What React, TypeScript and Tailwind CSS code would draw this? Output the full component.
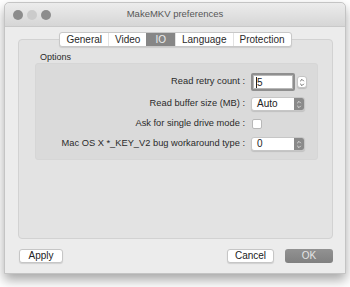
import React from "react";

const tabs = ["General", "Video", "IO", "Language", "Protection"];

const Stepper = () => (
  <div className="flex h-[12px] w-[10px] flex-col items-center justify-center rounded-[3px] border border-[#c4c4c4] bg-white shadow-[0_1px_1px_rgba(0,0,0,0.15)]">
    <svg width="6" height="9" viewBox="0 0 6 9" fill="none" stroke="#555" strokeWidth="0.9">
      <path d="M1.2 3.2 L3 1.4 L4.8 3.2" />
      <path d="M1.2 5.8 L3 7.6 L4.8 5.8" />
    </svg>
  </div>
);

const Popup = ({ value }: { value: string }) => (
  <div className="flex h-[14px] w-[54px] items-stretch overflow-hidden rounded-[3px] border border-[#c6c6c6] bg-white shadow-[0_1px_1px_rgba(0,0,0,0.12)]">
    <span className="flex-1 pl-[5px] text-[10px] leading-[12px] text-[#222]">{value}</span>
    <span className="flex w-[10px] items-center justify-center bg-[#8a8a8a]">
      <svg width="6" height="9" viewBox="0 0 6 9" fill="none" stroke="#e6e6e6" strokeWidth="0.9">
        <path d="M1.2 3.2 L3 1.4 L4.8 3.2" />
        <path d="M1.2 5.8 L3 7.6 L4.8 5.8" />
      </svg>
    </span>
  </div>
);

const Row = ({ label, children }: { label: string; children: React.ReactNode }) => (
  <div className="flex h-[20px] items-center">
    <span className="w-[209px] text-right text-[9.3px] text-[#2a2a2a]">{label}</span>
    <div className="ml-[6px] flex items-center">{children}</div>
  </div>
);

const App = () => {
  return (
    <div
      className="h-[287px] w-[350px] overflow-hidden bg-white pl-[4px] pt-[2px]"
      style={{ fontFamily: '"Liberation Sans", Arial, sans-serif' }}
    >
      <div className="flex h-[272px] w-[342px] flex-col rounded-t-[5px] border border-[#c4c4c4] bg-[#ececec] shadow-[0_6px_12px_rgba(0,0,0,0.35)]">
        <div className="relative flex h-[24px] items-center rounded-t-[5px] border-b border-[#c9c9c9] bg-gradient-to-b from-[#ececec] to-[#d6d6d6] pl-[8px]">
          <div className="flex gap-[4px]">
            <span className="h-[10px] w-[10px] rounded-full bg-[#8c8c8c]" />
            <span className="h-[10px] w-[10px] rounded-full bg-[#cbcbcb]" />
            <span className="h-[10px] w-[10px] rounded-full bg-[#8c8c8c]" />
          </div>
          <span className="absolute left-0 right-0 text-center text-[9.5px] text-[#575757]">
            MakeMKV preferences
          </span>
        </div>

        <div className="flex flex-1 flex-col pl-[13px] pt-[5px]">
          <div className="relative z-10 flex w-[315px] justify-center">
            <div className="flex h-[15px] overflow-hidden rounded-[3px] border border-[#c8c8c8] bg-white shadow-[0_1px_1px_rgba(0,0,0,0.1)]">
              {tabs.map((t, i) => (
                <span
                  key={t}
                  className={
                    t === "IO"
                      ? "flex items-center bg-[#868686] px-[9px] text-[10px] text-[#ededed]"
                      : i === 0
                        ? "flex items-center px-[6px] text-[10px] text-[#2a2a2a]"
                        : "flex items-center border-l border-[#e2e2e2] px-[6px] text-[10px] text-[#2a2a2a]"
                  }
                >
                  {t}
                </span>
              ))}
            </div>
          </div>

          <div className="-mt-[8px] h-[200px] w-[315px] rounded-[4px] border border-[#d2d2d2] bg-[#e3e3e3] pl-[16px] pt-[11px]">
            <div className="pl-[5px] text-[9px] leading-[12px] text-[#2a2a2a]">Options</div>
            <div className="h-[97px] w-[283px] rounded-[3px] border border-[#d6d6d6] bg-[#dadada] pt-[8px]">
              <div className="mb-[2px]">
                <Row label="Read retry count :">
                  <div className="rounded-[2px] border-2 border-[#8f8f8f] p-0">
                    <div className="flex h-[14px] w-[40px] items-center border border-[#b8b8b8] bg-white pl-[2px] text-[10px] text-[#222]">
                      <span className="border-l border-[#222] leading-[11px]">5</span>
                    </div>
                  </div>
                  <div className="ml-[2px]">
                    <Stepper />
                  </div>
                </Row>
              </div>
              <Row label="Read buffer size (MB) :">
                <Popup value="Auto" />
              </Row>
              <Row label="Ask for single drive mode :">
                <span className="ml-[1px] h-[10px] w-[10px] rounded-[2px] border border-[#b8b8b8] bg-white" />
              </Row>
              <Row label="Mac OS X *_KEY_V2 bug workaround type :">
                <Popup value="0" />
              </Row>
            </div>
          </div>

          <div className="mt-[10px] flex w-[315px] items-center">
            <button className="ml-[1px] h-[14px] w-[44px] rounded-[3px] border border-[#c6c6c6] bg-white text-[10px] leading-[12px] text-[#222] shadow-[0_1px_1px_rgba(0,0,0,0.12)]">
              Apply
            </button>
            <button className="ml-auto h-[14px] w-[47px] rounded-[3px] border border-[#c6c6c6] bg-white text-[10px] leading-[12px] text-[#222] shadow-[0_1px_1px_rgba(0,0,0,0.12)]">
              Cancel
            </button>
            <button className="ml-[11px] h-[14px] w-[48px] rounded-[3px] bg-gradient-to-b from-[#929292] to-[#808080] text-[10px] leading-[12px] text-[#e4e4e4]">
              OK
            </button>
          </div>
        </div>
      </div>
    </div>
  );
};

export default App;
